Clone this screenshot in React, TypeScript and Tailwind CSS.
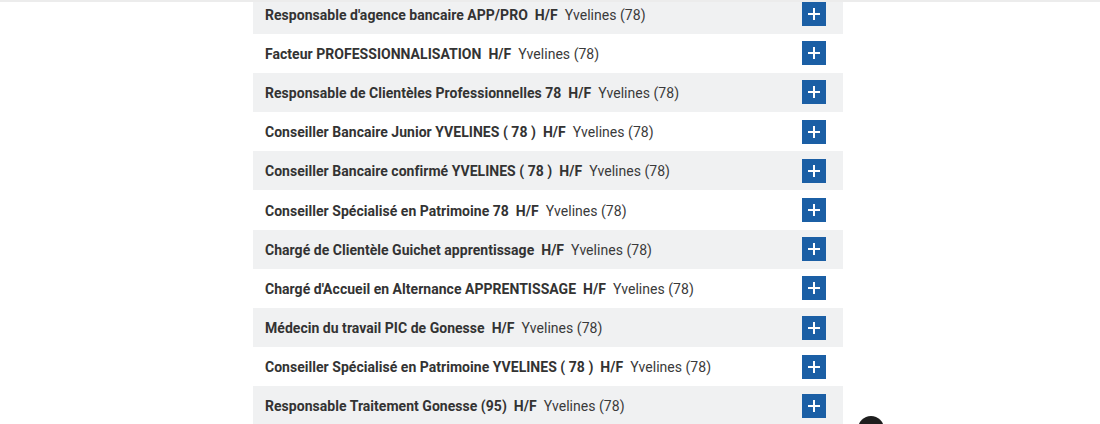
const jobs = [
  "Responsable d'agence bancaire APP/PRO",
  "Facteur PROFESSIONNALISATION",
  "Responsable de Clientèles Professionnelles 78",
  "Conseiller Bancaire Junior YVELINES ( 78 )",
  "Conseiller Bancaire confirmé YVELINES ( 78 )",
  "Conseiller Spécialisé en Patrimoine 78",
  "Chargé de Clientèle Guichet apprentissage",
  "Chargé d'Accueil en Alternance APPRENTISSAGE",
  "Médecin du travail PIC de Gonesse",
  "Conseiller Spécialisé en Patrimoine YVELINES ( 78 )",
  "Responsable Traitement Gonesse (95)",
];

function PlusButton() {
  return (
    <button className="flex h-6 w-6 items-center justify-center bg-[#1b5fa5]">
      <svg width="14" height="14" viewBox="0 0 14 14">
        <path d="M7 1v12M1 7h12" stroke="white" strokeWidth="2" />
      </svg>
    </button>
  );
}

export default function App() {
  return (
    <div
      className="relative h-[424px] w-[1100px] overflow-hidden bg-white"
      style={{ fontFamily: "Roboto, 'Liberation Sans', sans-serif" }}
    >
      <div className="absolute left-0 right-0 top-0 h-[2px] bg-[#ececec]" />
      <ul className="ml-[253px] mt-[-5.5px] w-[590px]">
        {jobs.map((job, i) => (
          <li
            key={job}
            className={`flex h-[39.2px] items-center justify-between pl-3 pr-[17px] ${
              i % 2 === 0 ? "bg-[#f0f1f2]" : "bg-white"
            }`}
          >
            <p className="pt-[2px] text-[14px] tracking-[0.03px] text-[#333]">
              <span className="font-bold">{job}</span>
              <span className="ml-[7px] font-bold">H/F</span>
              <span className="ml-[7px] text-[#3a3a3a]">Yvelines (78)</span>
            </p>
            <PlusButton />
          </li>
        ))}
      </ul>
      {/* scroll to top */}
      <div className="absolute left-[858px] top-[416px] h-[26px] w-[26px] rounded-full bg-[#1e1e1e]" />
    </div>
  );
}
